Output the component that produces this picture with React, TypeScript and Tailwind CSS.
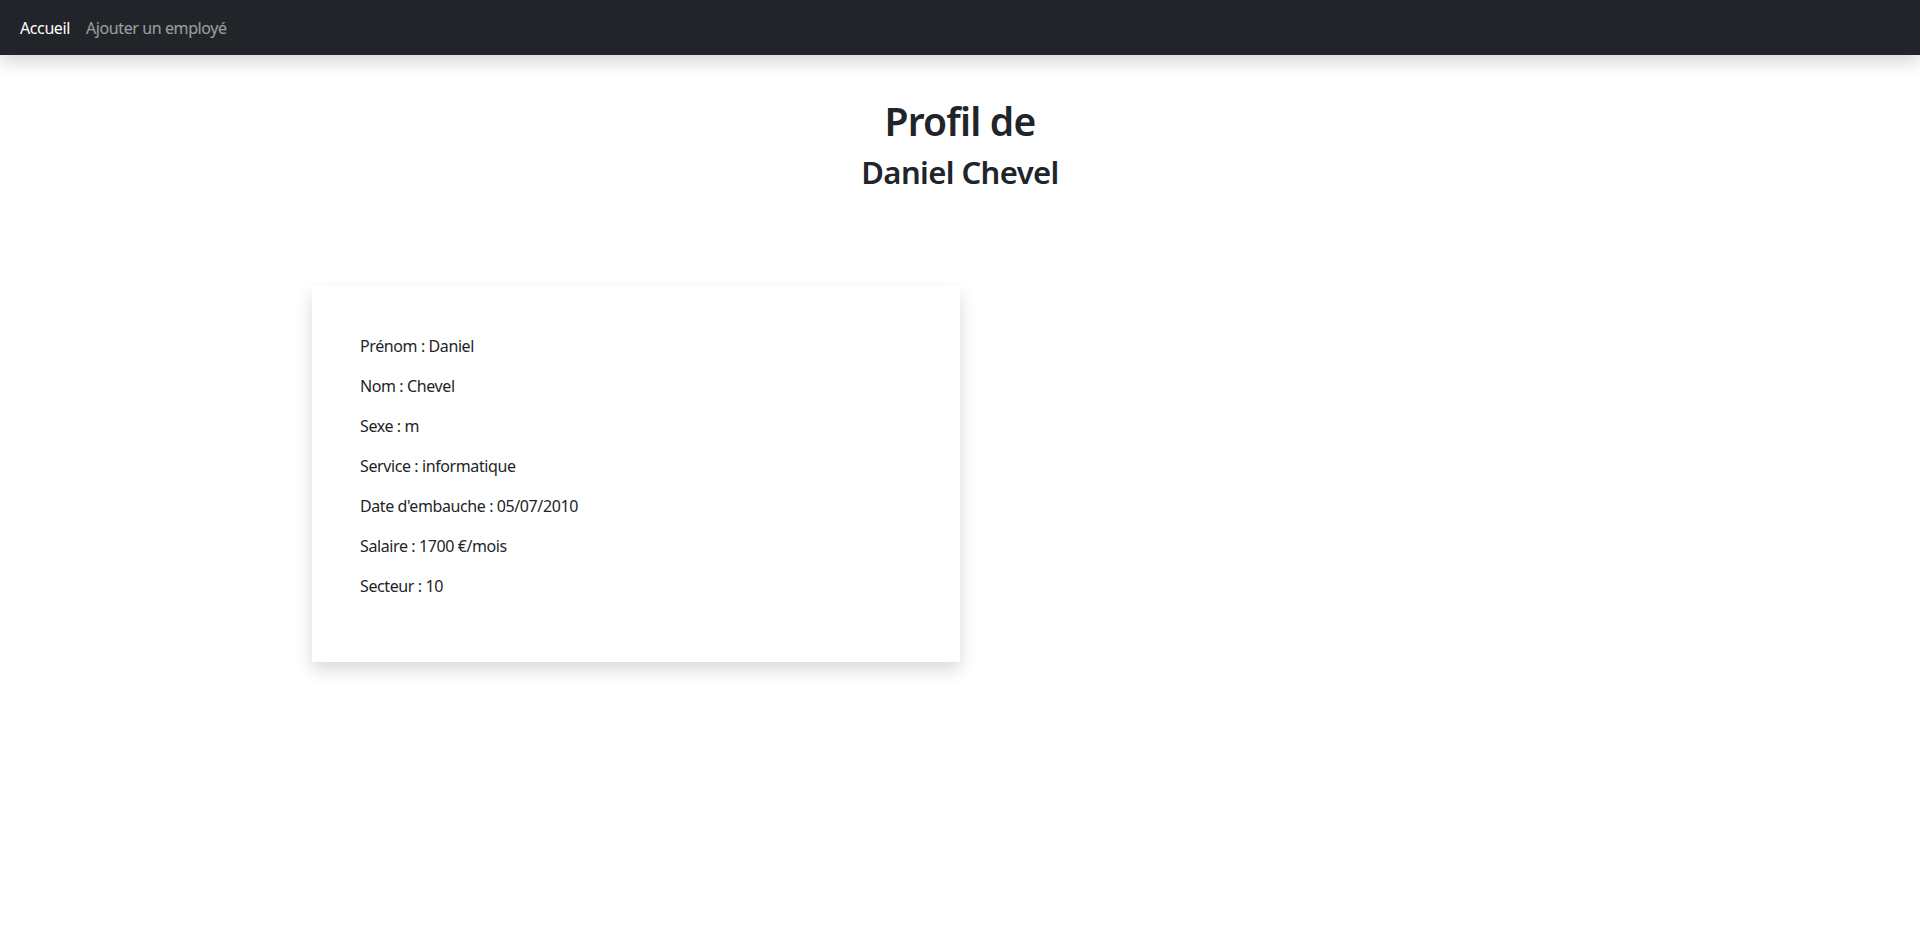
const fields = [
  ["Prénom", "Daniel"],
  ["Nom", "Chevel"],
  ["Sexe", "m"],
  ["Service", "informatique"],
  ["Date d'embauche", "05/07/2010"],
  ["Salaire", "1700 €/mois"],
  ["Secteur", "10"],
];

export default function App() {
  return (
    <div className="min-h-screen bg-white text-[#212529] font-['Noto_Sans','Open_Sans',sans-serif]">
      <nav className="flex h-[55px] items-center bg-[#212529] px-[12px] shadow-[0_8px_16px_rgba(0,0,0,0.15)]">
        <a className="px-[8px] text-[16px] tracking-[-0.4px] text-white">Accueil</a>
        <a className="px-[8px] text-[16px] tracking-[-0.4px] text-white/55">Ajouter un employé</a>
      </nav>

      <header className="mt-[42px] text-center">
        <h1 className="text-[39px] font-semibold leading-[48px] tracking-[-0.8px]">Profil de</h1>
        <h2 className="mt-[8px] text-[31px] font-semibold leading-[38px] tracking-[-0.6px]">Daniel Chevel</h2>
      </header>

      <main className="mx-auto mt-[95px] w-[1296px]">
        <div className="w-[648px] bg-white p-[48px] shadow-[0_8px_16px_rgba(0,0,0,0.15)]">
          {fields.map(([label, value]) => (
            <p key={label} className="mb-[16px] text-[16px] leading-[24px] tracking-[-0.4px]">
              {label} : {value}
            </p>
          ))}
        </div>
      </main>
    </div>
  );
}
